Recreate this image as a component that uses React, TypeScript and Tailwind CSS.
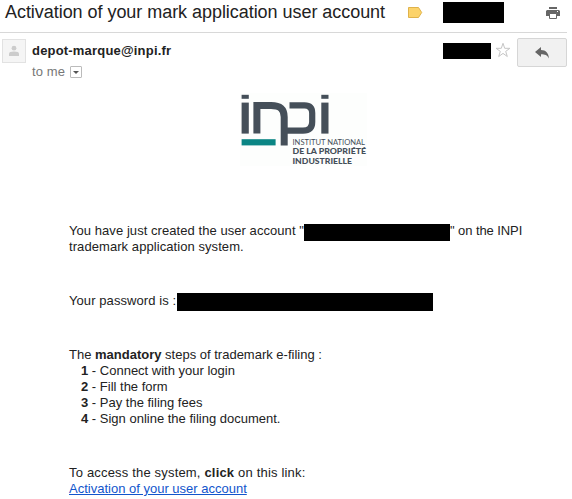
import React from "react";

function Redacted({ className }: { className: string }) {
  return <span className={`inline-block shrink-0 bg-black ${className}`} />;
}

function Logo() {
  return (
    <svg className="block overflow-visible" width="128" height="73" viewBox="240 93 128 73">
      <rect x="240" y="93" width="127" height="73" fill="#fdfefd" />
      <g fill="#454f59">
        <rect x="241.6" y="94.8" width="7.2" height="4" />
        <rect x="241.6" y="102.6" width="7.2" height="31" />
        <rect x="321.3" y="94.8" width="7.2" height="4" />
        <rect x="321.3" y="102.6" width="7.2" height="31" />
      </g>
      <g fill="none" stroke="#454f59">
        <path d="M256.9 133.6V105.6H271C280 105.6 284.2 109 284.2 117V145.5" strokeWidth="7" />
        <path d="M289.5 105.4H304.5C309.5 105.4 312.2 108 312.2 113V122C312.2 128 309 130.6 303 130.6H287" strokeWidth="6.2" />
      </g>
      <rect x="241.6" y="139.2" width="34" height="6.2" fill="#0a8584" />
      <g fontFamily="Lato, sans-serif" fill="#454f59">
        <text x="292.5" y="144.8" fontSize="7.5" textLength="72.5" lengthAdjust="spacingAndGlyphs">INSTITUT NATIONAL</text>
        <text x="292.5" y="154.2" fontSize="7.5" fontWeight="900" textLength="73.5" lengthAdjust="spacingAndGlyphs">DE LA PROPRIÉTÉ</text>
        <text x="292.5" y="163.5" fontSize="7.5" fontWeight="900" textLength="59.5" lengthAdjust="spacingAndGlyphs">INDUSTRIELLE</text>
      </g>
    </svg>
  );
}

const steps = ["Connect with your login", "Fill the form", "Pay the filing fees", "Sign online the filing document."];

export default function App() {
  return (
    <main className="h-[499px] w-[572px] overflow-hidden bg-white font-['Liberation_Sans',Arial,sans-serif] text-[13px] leading-4 text-[#222]">
      <header className="flex h-[33px] w-[567px] border-b border-[#d8d8d8]">
        <h1 className="ml-[5px] w-[403px] pt-px text-[18px] leading-[22px] tracking-[-0.045px] whitespace-nowrap"><span>Activation of your mark application user account</span></h1>
        <svg className="mt-[7px] block" width="15" height="11" viewBox="0 0 15 11"><path d="M.5.5h10l3.2 5-3.2 5H.5z" fill="#fcd36a" stroke="#dfb24b" /></svg>
        <Redacted className="mt-[2px] ml-5 h-[21px] w-[61px]" />
        <svg className="mt-[7px] ml-[42px] block shrink-0" width="14" height="12" viewBox="0 0 14 12" fill="#666"><path d="M3 0h8v2H3zM1 3h12l1 1v5h-3V7H3v2H0V4z" /><path d="M3.5 6.5h7v5h-7z" fill="white" stroke="#666" /><path d="M11 4h1v1h-1z" fill="white" /></svg>
      </header>
      <section className="flex h-[60px]">
        <div className="mt-[6px] ml-[2px] flex h-6 w-6 items-center justify-center border border-[#e2e2e2] bg-[#f5f5f5]">
          <svg width="10" height="12" viewBox="0 0 10 12" fill="#ccc"><circle cx="5" cy="3.2" r="2.4" /><path d="M0 11V9q0-2.4 5-2.4T10 9v2z" /></svg>
        </div>
        <div className="ml-[6px] w-[411px] pt-[10px]">
          <p className="font-bold tracking-[0.19px]"><span>depot-marque@inpi.fr</span></p>
          <div className="mt-[5px] flex h-[17px] text-[#777]"><span className="w-[38px] tracking-[0.1px]">to me</span><span className="mt-[2px] flex h-3 w-3 items-center justify-center rounded-[1px] border border-[#bbb]"><svg width="6" height="3" viewBox="0 0 6 3"><path d="M0 0h6L3 3z" fill="#555" /></svg></span></div>
        </div>
        <Redacted className="mt-[10px] h-4 w-12" />
        <svg className="mt-[9px] ml-1 block shrink-0" width="16" height="16" viewBox="0 0 16 16"><path d="M8 1.3l1.7 5h5.2l-4.2 3.1 1.6 5.1L8 11.4l-4.3 3.1 1.6-5.1L1.1 6.3h5.2z" fill="white" stroke="#c5c5c5" /></svg>
        <div className="mt-[5px] ml-[6px] flex h-[29px] w-[50px] items-center justify-center rounded-[2px] border border-[#d6d6d6] bg-[#f1f1f1]">
          <svg width="14" height="12" viewBox="0 0 14 12"><path d="M6 0v3c5 0 7.5 3 8 8.5C12 8 10 7.3 6 7.3V10L0 5z" fill="#666" /></svg>
        </div>
      </section>
      <article className="pl-[69px]">
        <div className="ml-[171px] h-[73px]"><Logo /></div>
        <div className="mt-14 whitespace-nowrap">
          <p className="flex h-[17px] leading-[18px]"><span className="w-[235px] tracking-[0.06px]">You have just created the user account "</span><Redacted className="mt-[2px] h-[17px] w-[146px]" /><span className="tracking-[-0.08px]">" on the INPI</span></p>
          <p className="leading-[16px] tracking-[0.07px]"><span>trademark application system.</span></p>
        </div>
        <p className="mt-[36px] flex h-[20px] leading-[20px]"><span className="w-[108px] tracking-[0.08px]">Your password is :</span><Redacted className="mt-[2px] h-[18px] w-[256px]" /></p>
        <p className="mt-[36px]">The <b>mandatory</b> steps of trademark e-filing :</p>
        <ol className="pl-3">{steps.map((s, i) => <li key={s}><b>{i + 1}</b> - {s}</li>)}</ol>
        <p className="mt-[38px] tracking-[0.18px]">To access the system, <b>click</b> on this link:</p>
        <p><a className="text-[#15c] underline" href="#">Activation of your user account</a></p>
      </article>
    </main>
  );
}
